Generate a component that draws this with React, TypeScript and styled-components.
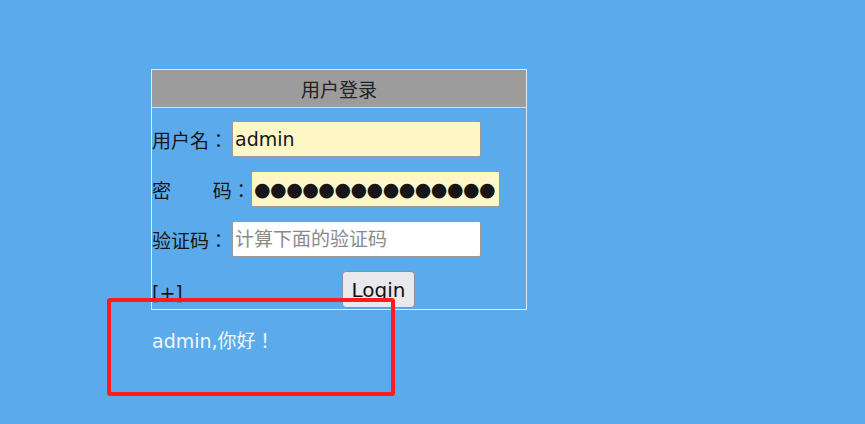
import React from "react";
import styled, { createGlobalStyle } from "styled-components";

const FONT = `"DejaVu Sans", "Noto Sans CJK TC", sans-serif`;

const GlobalStyle = createGlobalStyle`
  html, body {
    margin: 0;
    padding: 0;
    background: #5babec;
    width: 865px;
    height: 424px;
    overflow: hidden;
  }
  body {
    font-family: ${FONT};
  }
`;

const Page = styled.div`
  position: relative;
  width: 865px;
  height: 424px;
  box-sizing: border-box;
  padding: 69px 0 0 151px;
  font-size: 19px;
  color: #161616;
`;

const Panel = styled.div`
  width: 376px;
  box-sizing: border-box;
  border: 1px solid #e4e8ee;
`;

const Header = styled.div`
  height: 37px;
  background: #9c9c9c;
  border-bottom: 1px solid #d8dde3;
  display: flex;
  align-items: center;
  justify-content: center;
  color: #222;
  font-size: 19px;
`;

const Body = styled.div`
  display: flex;
  flex-direction: column;
  gap: 14px;
  padding: 13px 0 1px 0;
`;

const Row = styled.div<{ $h?: number }>`
  display: flex;
  align-items: center;
  height: ${(p) => p.$h ?? 36}px;
`;

const Label = styled.span<{ $w: number }>`
  width: ${(p) => p.$w}px;
  white-space: pre;
  font-size: 19px;
  color: #161616;
  flex: none;
`;

const Field = styled.input<{ $bg: string; $spacing?: number }>`
  width: 249px;
  height: 36px;
  box-sizing: border-box;
  border: 1px solid #9a9a9a;
  border-radius: 2px;
  background: ${(p) => p.$bg};
  font-family: ${FONT};
  font-size: 19px;
  letter-spacing: ${(p) => p.$spacing ?? 0}px;
  color: #161616;
  padding: 0 2px;
  outline: none;
  &::placeholder {
    color: #8a8a8a;
  }
`;

const Plus = styled.span`
  font-size: 19px;
  width: 190px;
  flex: none;
  align-self: flex-end;
  line-height: 22px;
  margin-bottom: 4px;
`;

const LoginButton = styled.button`
  width: 73px;
  height: 37px;
  box-sizing: border-box;
  border: 1px solid #8f8f9d;
  border-radius: 4px;
  background: #e9e9ed;
  font-family: "DejaVu Sans", sans-serif;
  font-size: 20px;
  color: #111;
  padding: 0;
`;

const Greeting = styled.div`
  margin-top: 16px;
  padding-left: 1px;
  font-size: 19px;
  color: #f2f6fa;
`;

const Highlight = styled.div`
  position: absolute;
  left: 107px;
  top: 298px;
  width: 288px;
  height: 98px;
  box-sizing: border-box;
  border: 4px solid #ff1c1c;
  border-radius: 3px;
  pointer-events: none;
`;

const MASK = "\u25CF".repeat(15);

export default function App() {
  return (
    <>
      <GlobalStyle />
      <Page>
        <Panel>
          <Header>用户登录</Header>
          <Body>
            <Row>
              <Label $w={80}>用户名：</Label>
              <Field $bg="#fff8c6" type="text" defaultValue="admin" />
            </Row>
            <Row>
              <Label $w={99}>{"密\u3000\u3000\u2009码："}</Label>
              <Field
                $bg="#fff8c6"
                $spacing={-0.5}
                type="text"
                readOnly
                aria-label="密码"
                defaultValue={MASK}
              />
            </Row>
            <Row>
              <Label $w={80}>验证码：</Label>
              <Field $bg="#ffffff" type="text" placeholder="计算下面的验证码" />
            </Row>
            <Row $h={37}>
              <Plus>[+]</Plus>
              <LoginButton>Login</LoginButton>
            </Row>
          </Body>
        </Panel>
        <Greeting>admin,你好！</Greeting>
        <Highlight />
      </Page>
    </>
  );
}
